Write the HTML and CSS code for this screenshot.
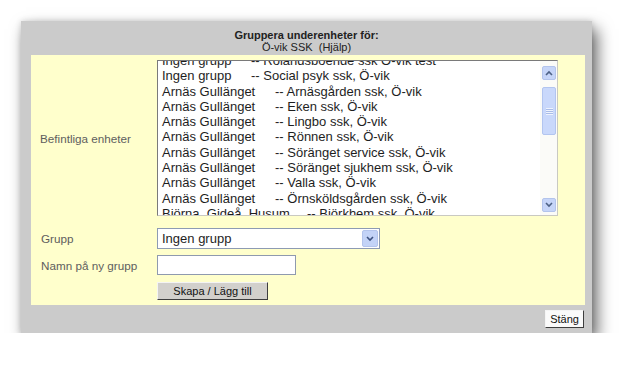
FILE: index.html
```html
<!DOCTYPE html>
<html lang="sv">
<head>
<meta charset="utf-8">
<title>Gruppera underenheter</title>
<link rel="stylesheet" href="styles.css">
</head>
<body>
<div class="dialog">
  <div class="dlg-head">
    <div class="title">Gruppera underenheter för:</div>
    <div class="subtitle">Ö-vik SSK&nbsp;&nbsp;(Hjälp)</div>
  </div>
  <div class="dlg-body">
    <div class="row row-list">
      <div class="label">Befintliga enheter</div>
      <div class="listbox">
        <div class="list-view">
          <div class="list-items">
            <div class="item"><span class="c1 w-ingen">Ingen grupp</span><span>-- Rolandsboende ssk Ö-vik test</span></div>
            <div class="item"><span class="c1 w-ingen">Ingen grupp</span><span>-- Social psyk ssk, Ö-vik</span></div>
            <div class="item"><span class="c1 w-arnas">Arnäs Gullänget</span><span>-- Arnäsgården ssk, Ö-vik</span></div>
            <div class="item"><span class="c1 w-arnas">Arnäs Gullänget</span><span>-- Eken ssk, Ö-vik</span></div>
            <div class="item"><span class="c1 w-arnas">Arnäs Gullänget</span><span>-- Lingbo ssk, Ö-vik</span></div>
            <div class="item"><span class="c1 w-arnas">Arnäs Gullänget</span><span>-- Rönnen ssk, Ö-vik</span></div>
            <div class="item"><span class="c1 w-arnas">Arnäs Gullänget</span><span>-- Söränget service ssk, Ö-vik</span></div>
            <div class="item"><span class="c1 w-arnas">Arnäs Gullänget</span><span>-- Söränget sjukhem ssk, Ö-vik</span></div>
            <div class="item"><span class="c1 w-arnas">Arnäs Gullänget</span><span>-- Valla ssk, Ö-vik</span></div>
            <div class="item"><span class="c1 w-arnas">Arnäs Gullänget</span><span>-- Örnsköldsgården ssk, Ö-vik</span></div>
            <div class="item"><span class="c1 w-bjorna">Björna, Gideå, Husum</span><span>-- Björkhem ssk, Ö-vik</span></div>
          </div>
        </div>
        <div class="scrollbar">
          <div class="sb-btn">
            <svg width="8" height="6" viewBox="0 0 8 6"><polyline points="1,5 4,2 7,5" fill="none" stroke="#4d6185" stroke-width="1.6"/></svg>
          </div>
          <div class="sb-thumb"><span class="grip"></span></div>
          <div class="sb-track"></div>
          <div class="sb-btn">
            <svg width="8" height="6" viewBox="0 0 8 6"><polyline points="1,1 4,4 7,1" fill="none" stroke="#4d6185" stroke-width="1.6"/></svg>
          </div>
        </div>
      </div>
    </div>
    <div class="row row-select">
      <div class="label">Grupp</div>
      <div class="select">
        <span class="select-text">Ingen grupp</span>
        <span class="select-btn">
          <svg width="8" height="6" viewBox="0 0 8 6"><polyline points="1,1 4,4 7,1" fill="none" stroke="#3d5280" stroke-width="1.6"/></svg>
        </span>
      </div>
    </div>
    <div class="row row-input">
      <div class="label">Namn på ny grupp</div>
      <div class="textbox"></div>
    </div>
    <div class="row row-button">
      <div class="label"></div>
      <div class="btn btn-create">Skapa / Lägg till</div>
    </div>
  </div>
  <div class="dlg-foot">
    <div class="btn btn-close">Stäng</div>
  </div>
</div>
</body>
</html>
```

FILE: styles.css
```css
html, body {
  margin: 0;
  padding: 0;
  background: #ffffff;
}

body {
  font-family: "Liberation Sans", Arial, sans-serif;
  color: #1e1e1e;
  padding: 21px 0 0 21px;
}

.dialog {
  width: 571px;
  height: 312px;
  background: #cbcbcb;
  box-shadow: 5px 8px 15px rgba(0, 0, 0, 0.6), 0 0 6px rgba(0, 0, 0, 0.14);
  display: flex;
  flex-direction: column;
}

.dlg-head {
  height: 34px;
  box-sizing: border-box;
  padding-top: 8px;
  text-align: center;
  font-size: 11px;
  line-height: 12px;
  color: #222;
}

.title {
  font-weight: bold;
}

.dlg-body {
  margin: 0 7px 0 10px;
  height: 250px;
  background: #ffffcc;
  box-sizing: border-box;
  padding-top: 5px;
}

.row {
  display: flex;
  align-items: center;
}

.label {
  width: 126px;
  box-sizing: border-box;
  padding-left: 10px;
  font-size: 11.7px;
  color: #5e5e5e;
  flex: none;
}

.row-list .label {
  padding-left: 9px;
}

/* listbox */
.listbox {
  width: 401px;
  height: 156px;
  box-sizing: border-box;
  border: 1px solid #c9c9c2;
  border-top-color: #7a7a7a;
  border-left-color: #7a7a7a;
  background: #ffffff;
  display: flex;
}

.list-view {
  flex: 1;
  overflow: hidden;
}

.list-items {
  margin-top: -8px;
  padding-left: 4px;
  font-size: 13px;
  line-height: 15.3px;
  color: #1e1e1e;
}

.item {
  white-space: nowrap;
}

.c1 {
  display: inline-block;
}

.w-ingen { width: 89px; }
.w-arnas { width: 113px; }
.w-bjorna { width: 145px; }

.scrollbar {
  width: 17px;
  flex: none;
  box-sizing: border-box;
  padding: 5px 1px 3px 2px;
  background: #fbfbf8;
  display: flex;
  flex-direction: column;
}

.sb-btn {
  height: 14px;
  box-sizing: border-box;
  border: 1px solid #b3c4ec;
  border-radius: 2px;
  background: #c6d5f8;
  display: flex;
  align-items: center;
  justify-content: center;
  flex: none;
}

.sb-thumb {
  height: 48px;
  margin-top: 7px;
  box-sizing: border-box;
  border: 1px solid #b2c5f0;
  border-radius: 2px;
  background: #c9d8fb;
  display: flex;
  align-items: center;
  justify-content: center;
  flex: none;
}

.grip {
  width: 7px;
  height: 7px;
  background: repeating-linear-gradient(to bottom, #eef3fe 0, #eef3fe 1px, #a9bce8 1px, #a9bce8 2px);
}

.sb-track {
  flex: 1;
}

/* select */
.row-select {
  margin-top: 12px;
}

.select {
  width: 223px;
  height: 21px;
  box-sizing: border-box;
  border: 1px solid #8d9bb3;
  background: #ffffff;
  display: flex;
  align-items: stretch;
}

.select-text {
  flex: 1;
  padding-left: 4px;
  font-size: 13px;
  line-height: 19px;
  color: #1e1e1e;
}

.select-btn {
  width: 16px;
  margin: 1px;
  border-radius: 2px;
  background: #c3d3f7;
  border: 1px solid #b3c4ec;
  box-sizing: border-box;
  display: flex;
  align-items: center;
  justify-content: center;
}

/* text input */
.row-input {
  margin-top: 6px;
}

.textbox {
  width: 139px;
  height: 20px;
  box-sizing: border-box;
  border: 1px solid #8f9aae;
  background: #ffffff;
}

/* buttons */
.row-button {
  margin-top: 7px;
}

.btn {
  box-sizing: border-box;
  font-size: 11px;
  color: #111;
  text-align: center;
  border: 1px solid;
  border-color: #f4f4f4 #3e3e3e #3e3e3e #f4f4f4;
}

.btn-create {
  width: 111px;
  height: 18px;
  line-height: 16px;
  background: #d2d0cc;
}

.dlg-foot {
  flex: 1;
  display: flex;
  justify-content: flex-end;
  align-items: center;
  padding-right: 8px;
}

.btn-close {
  width: 39px;
  height: 18px;
  line-height: 16px;
  background: #fafafa;
}
```
